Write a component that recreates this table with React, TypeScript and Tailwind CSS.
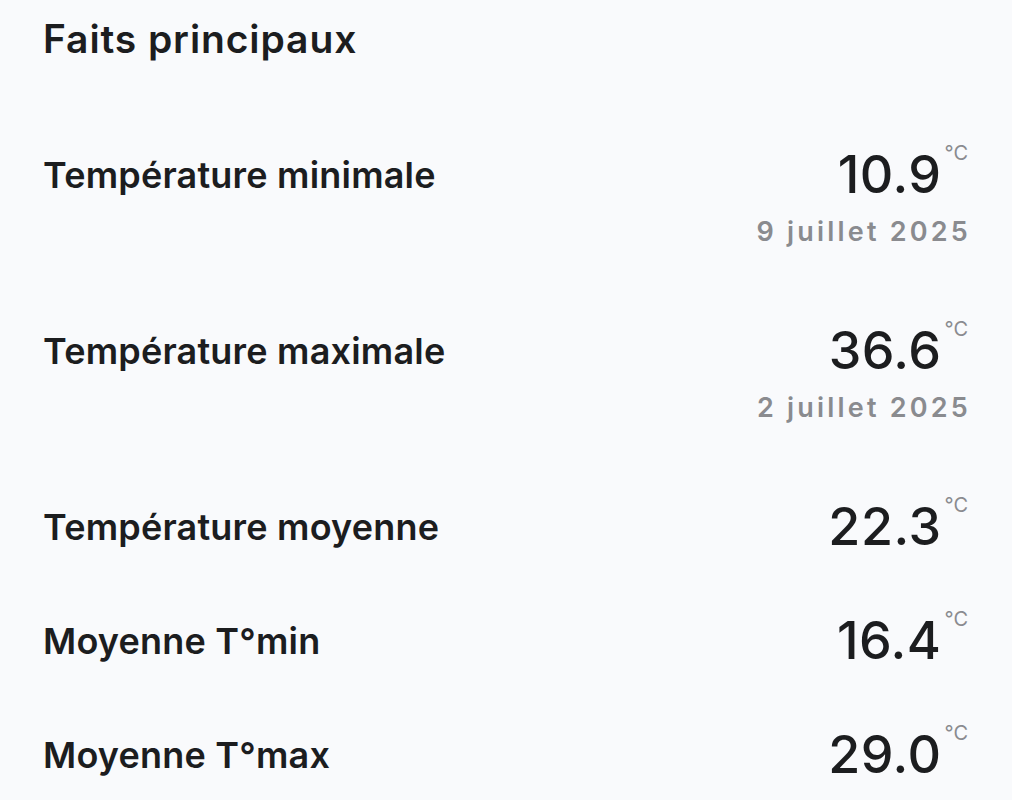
import React from "react";

type Row = { label: string; value: string; date?: string };

const rows: Row[] = [
  { label: "Température minimale", value: "10.9", date: "9 juillet 2025" },
  { label: "Température maximale", value: "36.6", date: "2 juillet 2025" },
  { label: "Température moyenne", value: "22.3" },
  { label: "Moyenne T°min", value: "16.4" },
  { label: "Moyenne T°max", value: "29.0" },
];

export default function App() {
  return (
    <div
      className="w-[1012px] h-[800px] overflow-hidden bg-[#f9fafc] text-[#1c1d1f]"
      style={{ fontFamily: "Inter, 'Noto Sans', sans-serif" }}
    >
      <div className="pl-[43px] pr-[44px] pt-[15px]">
        <h1 className="text-[39px] font-semibold leading-[48px] tracking-[0.9px]">Faits principaux</h1>
        <div className="mt-[88px] flex flex-col">
          {rows.map((r) => (
            <div key={r.label} className={r.date ? "h-[176px]" : "h-[114px]"}>
              <div className="flex items-start justify-between">
                <div className="text-[36px] font-semibold leading-[40px] mt-[4px] tracking-[0.2px]">{r.label}</div>
                <div className="flex flex-col items-end">
                  <div className="flex items-start">
                    <span className="text-[52px] font-medium leading-[48px] tracking-[0.5px]">{r.value}</span>
                    <span className="text-[20px] text-[#8a8b8f] leading-[20px] ml-[3px] -mt-[8px]">°C</span>
                  </div>
                  <div className="mt-[13px] text-[27px] font-semibold text-[#8a8b8f] leading-[40px] tracking-[3.2px] -mr-[3px]">
                    {r.date}
                  </div>
                </div>
              </div>
            </div>
          ))}
        </div>
      </div>
    </div>
  );
}
